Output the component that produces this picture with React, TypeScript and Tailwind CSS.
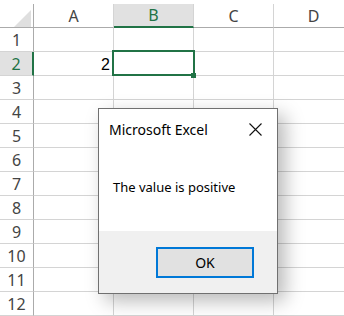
import React from "react";

const cols = ["A", "B", "C", "D"];
const rows = [1, 2, 3, 4, 5, 6, 7, 8, 9, 10, 11, 12];

export default function App() {
  return (
    <div
      className="relative w-[344px] h-[316px] overflow-hidden bg-white"
      style={{ fontFamily: '"Noto Sans", "Open Sans", sans-serif' }}
    >
      <div className="h-[4px]" />
      <div className="grid grid-cols-[34px_80px_80px_80px_80px]">
        {/* header row */}
        <div className="h-[24px] border-b border-r border-[#ababab] relative">
          <div className="absolute left-[14px] top-[6px] w-0 h-0 border-l-[17px] border-l-transparent border-b-[17px] border-b-[#dfdfdf]" />
        </div>
        {cols.map((c) =>
          c === "B" ? (
            <div
              key={c}
              className="h-[24px] bg-[#e1e1e1] border-b-2 border-b-[#217346] border-r border-r-[#d4d4d4] flex items-center justify-center text-[16px] text-[#217346]"
            >
              {c}
            </div>
          ) : (
            <div
              key={c}
              className="h-[24px] border-b border-b-[#ababab] border-r border-r-[#d4d4d4] flex items-center justify-center text-[16px] text-[#444]"
            >
              {c}
            </div>
          )
        )}
        {rows.map((r) => (
          <React.Fragment key={r}>
            {r === 2 ? (
              <div className="h-[24px] bg-[#e1e1e1] border-b border-b-[#d4d4d4] border-r-2 border-r-[#217346] flex items-center justify-center text-[16px] text-[#217346]">
                {r}
              </div>
            ) : (
              <div className="h-[24px] border-b border-b-[#d4d4d4] border-r border-r-[#ababab] flex items-center justify-center text-[16px] text-[#444]">
                {r}
              </div>
            )}
            {cols.map((c) => (
              <div
                key={c}
                className="h-[24px] border-b border-r border-[#d4d4d4] flex items-center justify-end pr-[3px] pt-[2px] text-[16px] text-black"
                style={{ fontFamily: '"Liberation Sans", Arial, sans-serif' }}
              >
                {r === 2 && c === "A" ? "2" : ""}
              </div>
            ))}
          </React.Fragment>
        ))}
      </div>

      {/* selection */}
      <div className="absolute left-[112px] top-[50px] w-[83px] h-[26px] border-2 border-[#217346]" />
      <div className="absolute left-[191px] top-[73px] w-[5px] h-[5px] bg-[#217346]" />

      {/* dialog */}
      <div className="absolute left-[98px] top-[108px] w-[180px] h-[186px] border border-[#707070] bg-white flex flex-col shadow-[7px_7px_18px_rgba(0,0,0,0.28)]">
        <div className="h-[40px] flex items-center justify-between pl-[10px] pr-[15px] pt-[1px]">
          <span className="text-[14px] text-black">Microsoft Excel</span>
          <svg width="13" height="13" viewBox="0 0 13 13">
            <path d="M0.5 0.5 L12.5 12.5 M12.5 0.5 L0.5 12.5" stroke="#111" strokeWidth="1.1" />
          </svg>
        </div>
        <div className="flex-1 flex items-center pl-[14px] pb-[4px]">
          <span className="text-[13px] text-black">The value is positive</span>
        </div>
        <div className="h-[62px] bg-[#f0f0f0] flex justify-end pr-[23px] pt-[16px]">
          <div className="w-[98px] h-[31px] border-2 border-[#0078d7] bg-[#e1e1e1] flex items-center justify-center text-[14px] text-black">
            OK
          </div>
        </div>
      </div>
    </div>
  );
}
